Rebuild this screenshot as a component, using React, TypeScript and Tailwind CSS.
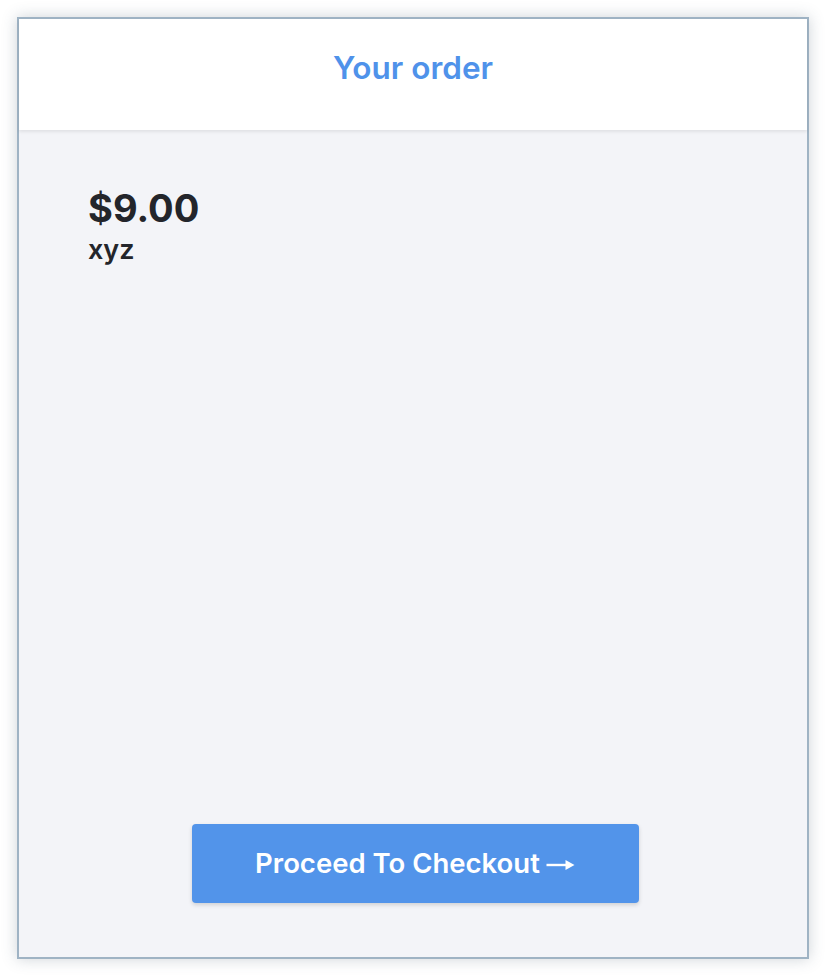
import React from "react";

export default function App() {
  return (
    <div className="min-h-[976px] w-[826px] bg-white p-[17px]">
      <div className="flex h-[942px] w-[792px] flex-col border-2 border-[#9fb3c4] bg-[#f3f4f8] shadow-[0_0_14px_rgba(60,80,100,0.25)]">
        <div className="relative z-10 flex h-[111px] items-center justify-center bg-white pb-[14px] shadow-[0_2px_3px_rgba(0,0,0,0.08)]">
          <h1 className="font-['Inter',sans-serif] text-[31.5px] font-semibold text-[#4f92ea]">Your order</h1>
        </div>

        <div className="flex flex-1 flex-col pl-[69px] pt-[54px] text-[#23252b]">
          <div className="font-['Inter',sans-serif] text-[38px] leading-[48px] font-bold">$9.00</div>
          <div className="font-['Inter',sans-serif] text-[27px] leading-[36px] font-semibold">xyz</div>
        </div>

        <div className="flex justify-center pb-[54px] pl-[4px]">
          <button className="flex h-[79px] w-[447px] items-center justify-center gap-[6px] rounded-[4px] bg-[#5294ea] font-['Inter',sans-serif] text-[27.5px] font-semibold text-white shadow-[0_2px_4px_rgba(0,0,0,0.15)]">
            <span>Proceed To Checkout</span>
            <svg width="29" height="12" viewBox="0 0 28 12" className="mt-[2px]">
              <rect x="0" y="4.8" width="20" height="2.4" fill="white" />
              <path d="M19 1 L28 6 L19 11 Z" fill="white" />
            </svg>
          </button>
        </div>
      </div>
    </div>
  );
}
